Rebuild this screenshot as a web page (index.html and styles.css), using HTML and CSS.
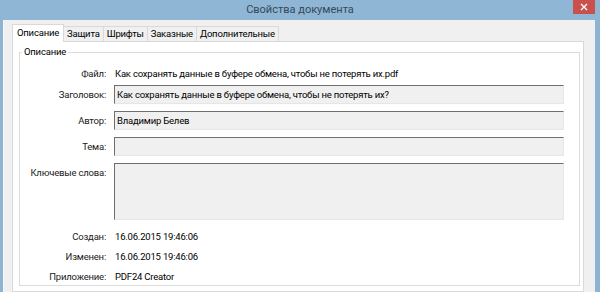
FILE: index.html
```html
<!DOCTYPE html>
<html lang="ru">
<head>
<meta charset="utf-8">
<title>Свойства документа</title>
<link rel="stylesheet" href="styles.css">
</head>
<body>
<div class="window">
  <div class="titlebar">
    <span></span>
    <span class="title">Свойства документа</span>
    <span class="close"><svg width="8" height="8" viewBox="0 0 8 8"><path d="M1 1 L7 7 M7 1 L1 7" stroke="#fff" stroke-width="1.3" fill="none"/></svg></span>
  </div>
  <div class="client">
    <div class="tabs">
      <div class="tab active">Описание</div>
      <div class="tab">Защита</div>
      <div class="tab">Шрифты</div>
      <div class="tab">Заказные</div>
      <div class="tab">Дополнительные</div>
    </div>
    <div class="panel">
      <fieldset class="group">
        <legend>Описание</legend>
        <div class="row r-file"><span class="label">Файл:</span><span class="value">Как сохранять данные в буфере обмена, чтобы не потерять их.pdf</span></div>
        <div class="row r-field"><span class="label">Заголовок:</span><span class="field">Как сохранять данные в буфере обмена, чтобы не потерять их?</span></div>
        <div class="row r-field"><span class="label">Автор:</span><span class="field">Владимир Белев</span></div>
        <div class="row r-field"><span class="label">Тема:</span><span class="field"></span></div>
        <div class="row r-field r-keys"><span class="label">Ключевые слова:</span><span class="field tall"></span></div>
        <div class="row r-info first"><span class="label">Создан:</span><span class="value">16.06.2015 19:46:06</span></div>
        <div class="row r-info"><span class="label">Изменен:</span><span class="value">16.06.2015 19:46:06</span></div>
        <div class="row r-info"><span class="label">Приложение:</span><span class="value">PDF24 Creator</span></div>
      </fieldset>
    </div>
  </div>
</div>
</body>
</html>
```
FILE: styles.css
```css
html, body {
  margin: 0;
  padding: 0;
  width: 600px;
  height: 292px;
  overflow: hidden;
  background: #8db4d3;
  font-family: Roboto, "Noto Sans", sans-serif;
  font-size: 9.5px;
  letter-spacing: -0.2px;
  color: #000;
}
.window {
  display: flex;
  flex-direction: column;
  height: 292px;
}
.titlebar {
  height: 20px;
  flex: none;
  display: grid;
  grid-template-columns: 1fr auto 1fr;
  align-items: start;
  background: #8fb6d4;
}
.title {
  font-size: 11px;
  letter-spacing: 0;
  line-height: 20px;
  color: #34495a;
}
.close {
  justify-self: end;
  width: 22px;
  height: 14px;
  margin-right: 5px;
  background: #c9504c;
  display: flex;
  align-items: center;
  justify-content: center;
}
.close svg { display: block; }
.client {
  flex: 1;
  margin: 0 5px 0 3px;
  background: #f0f0f0;
  padding: 4px 11px 0 8px;
  display: flex;
  flex-direction: column;
  border-left: 1px solid #f7f7f7;
}
.tabs {
  display: flex;
  align-items: flex-end;
  height: 17px;
  padding-left: 3px;
  position: relative;
  z-index: 1;
}
.tab {
  height: 14px;
  line-height: 14px;
  padding: 0 3px;
  border: 1px solid #d9d9d9;
  border-bottom: none;
  margin-left: -1px;
  background: #f0f0f0;
}
.tab.active {
  height: 17px;
  line-height: 16px;
  background: #fff;
  margin: 0 -2px 0 -3px;
  padding: 0 4px;
  margin-bottom: -1px;
  position: relative;
  z-index: 2;
}
.tab.active + .tab { margin-left: 0; padding-left: 4px; }
.panel {
  flex: 1;
  background: #fff;
  border: 1px solid #d9d9d9;
  padding: 4px 3px 0 6px;
}
.group {
  margin: 0;
  border: 1px solid #dcdcdc;
  padding: 5px 15px 0 0;
  min-width: 0;
  height: 240px;
  box-sizing: border-box;
}
.group legend {
  padding: 0 2px;
  margin-left: 2px;
  line-height: 12px;
}
.row {
  display: flex;
  align-items: center;
  height: 20px;
  flex: none;
}
.label {
  width: 86px;
  flex: none;
  text-align: right;
  margin-right: 8px;
  color: #1a1a1a;
}
.value { padding-left: 1px; }
.r-field { margin-top: 7px; height: 19px; }
.r-file + .r-field { margin-top: 2px; }
.field {
  flex: 1;
  height: 19px;
  box-sizing: border-box;
  background: #f0f0f0;
  border: 1px solid;
  border-color: #6e6e6e #e6e6e6 #e6e6e6 #6e6e6e;
  line-height: 17px;
  padding-left: 2px;
}
.r-keys {
  height: 57px;
  align-items: flex-start;
}
.r-keys .label { padding-top: 4px; }
.field.tall { height: 57px; }
.r-info.first { margin-top: 6px; }
```
